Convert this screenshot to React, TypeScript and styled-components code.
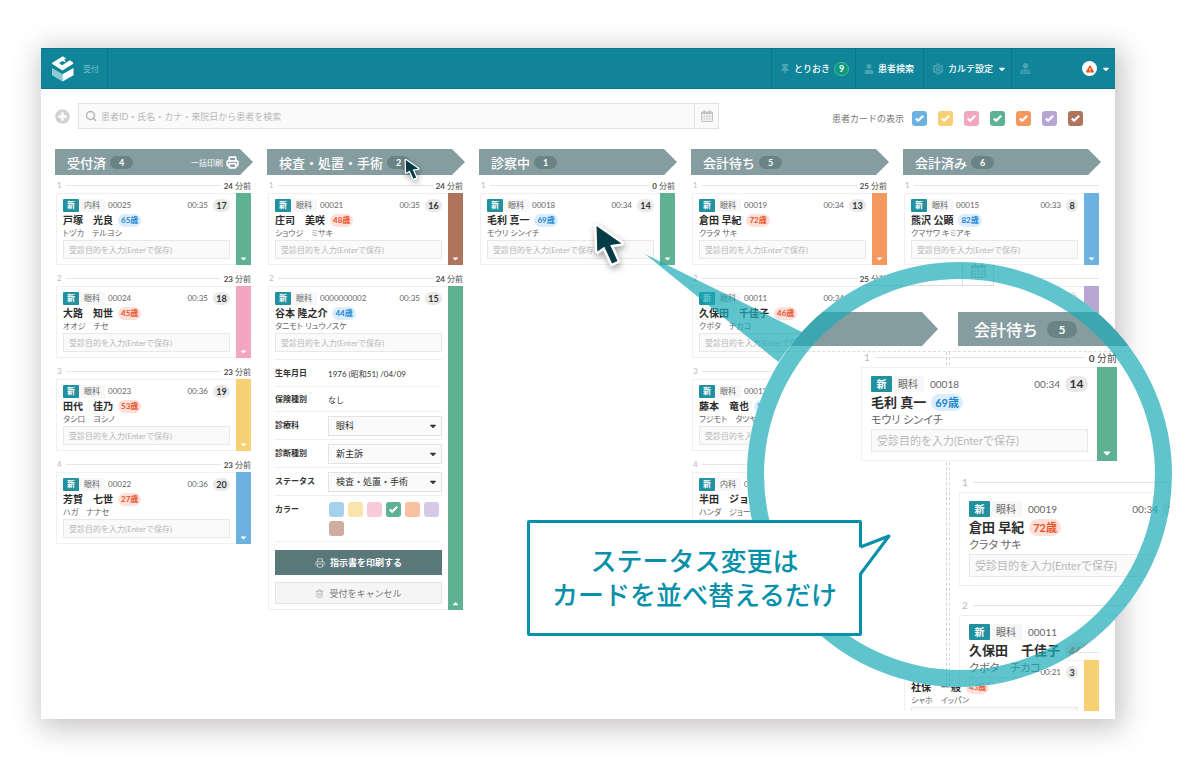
import React from "react";
import styled, { createGlobalStyle, css } from "styled-components";
import { FaCaretDown, FaCaretUp, FaExclamationTriangle, FaPlusCircle, FaThumbtack, FaUser, FaUserMd } from "react-icons/fa";
import { Check, Printer, Search, Settings, Trash2 } from "lucide-react";

const Global = createGlobalStyle`
  * { box-sizing: border-box; }
  body {
    margin: 0;
    background: #fff;
    color: #333;
    font-family: Lato, "Noto Sans CJK JP", sans-serif;
  }
  button, input, select { font-family: inherit; margin: 0; }
`;

const palette = {
  blue: "#6bb2e1",
  yellow: "#f8d074",
  pink: "#f3a6c1",
  green: "#5eb193",
  orange: "#f49860",
  purple: "#b9a5d3",
  brown: "#b0745d",
};
type Color = keyof typeof palette;

type Scale = "normal" | "large";
const metrics = {
  normal: {
    head: 16, meta: 8, small: 8, name: 10, pill: 9, age: 8, kana: 8,
    top: 5, side: 6, row: 13, nameRow: 13, kanaRow: 13, field: 19, bar: 15, badge: 16, fieldPad: 5, tag: 5,
  },
  large: {
    head: 20, meta: 10, small: 11, name: 13, pill: 12, age: 11, kana: 11,
    top: 8, side: 9, row: 16, nameRow: 17, kanaRow: 18, field: 23, bar: 20, badge: 21, fieldPad: 5, tag: 6,
  },
};
type Sized = { $scale: Scale };
const m = (key: keyof typeof metrics.normal) => (p: Sized) => `${metrics[p.$scale][key]}px`;

/* ---------- page and window ---------- */

const Page = styled.div`
  padding: 48px 85px 52px 41px;
  overflow: hidden;
`;

const AppWindow = styled.div`
  position: relative;
  background: #fff;
  box-shadow: 3px 5px 26px 4px rgba(80, 70, 70, 0.32);
  padding-bottom: 8px;
`;

const TopBar = styled.header`
  display: flex;
  height: 41px;
  background: #10859a;
  border-top: 1px solid #0c7388;
  border-bottom: 1px solid #0c7388;
  color: #fff;
`;

const Brand = styled.div`
  display: flex;
  align-items: center;
  gap: 9px;
  width: 67px;
  padding-left: 11px;
  border-right: 1px solid #0c778b;
  font-size: 8px;
  color: #79bbc7;
`;

const TopNav = styled.nav`
  display: flex;
  margin-left: auto;
`;

const NavButton = styled.button<{ $width: number }>`
  display: flex;
  align-items: center;
  gap: 4px;
  width: ${(p) => p.$width}px;
  padding: 0 4px 0 8px;
  border: 0;
  border-left: 1px solid #0c778b;
  background: none;
  color: #fff;
  font-size: 9px;
  font-weight: 500;
  white-space: nowrap;
  > svg:first-child { color: #4ba3b2; }
`;

const CountDot = styled.span`
  display: grid;
  place-items: center;
  width: 15px;
  height: 14px;
  border-radius: 7px;
  background: #0f9a7c;
  border: 1px solid #4db8a5;
  font-weight: 700;
`;

const AlertDot = styled.span`
  display: grid;
  place-items: center;
  width: 15px;
  height: 15px;
  margin-left: auto;
  border-radius: 50%;
  background: #fff;
  color: #e8501f;
`;

/* ---------- toolbar ---------- */

const Toolbar = styled.div`
  display: flex;
  align-items: center;
  padding: 14px 32px 20px 14px;
`;

const AddButton = styled.button`
  display: grid;
  padding: 0;
  margin-right: 8px;
  border: 0;
  background: none;
  color: #d2d2d2;
`;

const SearchBox = styled.div`
  display: flex;
  align-items: center;
  flex: 0 1 641px;
  height: 26px;
  border: 1px solid #e2e2e2;
  background: #fafafa;
  color: #b5b5b5;
  > svg { margin: 0 4px 0 6px; }
`;

const SearchInput = styled.input`
  flex: 1;
  min-width: 0;
  padding: 0;
  border: 0;
  outline: 0;
  background: none;
  font-size: 9px;
  &::placeholder { color: #b8b8b8; opacity: 1; }
`;

const CalendarButton = styled.button`
  display: grid;
  place-items: center;
  width: 24px;
  height: 24px;
  padding: 0;
  border: 0;
  border-left: 1px solid #e2e2e2;
  background: #fafafa;
  color: #c2c2c2;
`;

const Filters = styled.div`
  display: flex;
  align-items: center;
  gap: 11px;
  margin: 5px 0 0 auto;
  font-size: 9px;
  color: #777;
`;
const FilterLabel = styled.span`
  margin-right: -3px;
`;

const Tick = styled.label<{ $color: string; $pale?: boolean }>`
  display: grid;
  width: 15px;
  height: 15px;
  border-radius: 3px;
  background: ${(p) => p.$color};
  opacity: ${(p) => (p.$pale ? 0.6 : 1)};
  color: #fff;
  > * { grid-area: 1 / 1; place-self: center; }
  input { appearance: none; width: 15px; height: 15px; }
`;

/* ---------- board ---------- */

const Board = styled.main`
  display: grid;
  grid-template-columns: repeat(5, minmax(0, 1fr));
  gap: 14px;
  max-height: 562px;
  padding: 0 14px;
  overflow: hidden;
`;

const Lane = styled.section`
  min-width: 0;
`;

const LaneHead = styled.h2<Sized>`
  --tip: ${(p) => (p.$scale === "large" ? 16 : 13)}px;
  display: flex;
  align-items: center;
  margin: 0;
  background: #859da0;
  color: #fff;
  font-weight: 500;
  white-space: nowrap;
  clip-path: polygon(0 0, calc(100% - var(--tip)) 0, 100% 50%, calc(100% - var(--tip)) 100%, 0 100%);
  ${(p) =>
    p.$scale === "large"
      ? css`height: 34px; gap: 9px; padding: 0 16px; font-size: 16px;`
      : css`height: 26px; gap: 4px; padding: 0 14px 0 12px; font-size: 13px;`}
`;

const LaneCount = styled.span<Sized>`
  display: grid;
  place-items: center;
  background: #6a8385;
  font-weight: 700;
  ${(p) =>
    p.$scale === "large"
      ? css`width: 30px; height: 17px; border-radius: 9px; font-size: 12px;`
      : css`width: 23px; height: 13px; border-radius: 7px; font-size: 9px;`}
`;

const PrintAll = styled.button`
  display: flex;
  align-items: center;
  gap: 3px;
  margin-left: auto;
  padding: 0;
  border: 0;
  background: none;
  color: #fff;
  font-size: 8px;
`;

const CardList = styled.div`
  display: flex;
  flex-direction: column;
  gap: 5px;
  padding: 2px 2px 0 1px;
`;

const EntryHead = styled.div<Sized>`
  display: flex;
  align-items: center;
  gap: ${(p) => (p.$scale === "large" ? 4 : 3)}px;
  height: ${m("head")};
  padding-left: ${(p) => (p.$scale === "large" ? 3 : 1)}px;
  font-size: ${m("meta")};
  color: #b9b9b9;
  white-space: nowrap;
  &::before { content: attr(data-index); }
`;

const Rule = styled.span`
  flex: 1;
  height: 1px;
  margin-left: 1px;
  background: #e6e6e6;
`;

const Wait = styled.span`
  color: #4c4c4c;
  b { font-weight: 700; }
`;

const CardBox = styled.div`
  display: flex;
  border: 1px solid #f0f0f0;
  border-right: 0;
  background: #fff;
`;

const CardBody = styled.div<Sized>`
  flex: 1;
  min-width: 0;
  padding: ${m("top")} ${m("side")} ${m("top")};
`;

const MetaRow = styled.div<Sized>`
  display: flex;
  align-items: center;
  height: ${m("row")};
  font-size: ${m("meta")};
  line-height: ${m("row")};
  color: #666;
`;

const NewBadge = styled.span<Sized>`
  width: ${m("badge")};
  border-radius: 1px;
  background: #21909f;
  color: #fff;
  font-weight: 700;
  text-align: center;
`;

const DeptTag = styled.span<Sized>`
  padding: 0 ${m("tag")};
  background: #f7f7f7;
`;

const PatientId = styled.span<Sized>`
  margin-left: ${(p) => (p.$scale === "large" ? 6 : 3)}px;
`;

const VisitTime = styled.time`
  margin-left: auto;
`;

const Queue = styled.span<Sized & { $short: boolean }>`
  width: ${(p) => (p.$scale === "large" ? 23 : p.$short ? 12 : 17)}px;
  margin-left: 5px;
  border-radius: 9px;
  background: #e9e9e9;
  color: #333;
  font-size: ${m("pill")};
  font-weight: 700;
  text-align: center;
`;

const NameRow = styled.div<Sized>`
  display: flex;
  align-items: center;
  gap: 5px;
  height: ${m("nameRow")};
  margin-top: 2px;
  font-size: ${m("name")};
  font-weight: 700;
  line-height: ${m("nameRow")};
  color: #2c2c2c;
  white-space: pre;
`;

const Age = styled.span<Sized & { $male: boolean }>`
  padding: 0 ${(p) => (p.$scale === "large" ? 4 : 3)}px;
  border-radius: 9px;
  font-size: ${m("age")};
  background: ${(p) => (p.$male ? "#dbedfb" : "#fde0d9")};
  color: ${(p) => (p.$male ? "#1a86d0" : "#e9501f")};
`;

const Kana = styled.div<Sized>`
  height: ${m("kanaRow")};
  font-size: ${m("kana")};
  line-height: ${m("kanaRow")};
  font-feature-settings: "palt";
  color: #666;
  white-space: pre;
`;

const Purpose = styled.input<Sized>`
  display: block;
  width: 100%;
  height: ${m("field")};
  padding: 0 ${m("fieldPad")};
  border: 1px solid #e8e8e8;
  border-radius: 0;
  outline: 0;
  background: #fafafa;
  font-size: ${m("small")};
  &::placeholder { color: #b8b8b8; opacity: 1; }
`;

const ColorBar = styled.button<Sized & { $color: string }>`
  display: flex;
  justify-content: center;
  align-items: flex-end;
  width: ${m("bar")};
  margin: -1px 0;
  padding: 0 0 2px;
  border: 0;
  background: ${(p) => p.$color};
  color: #fff;
`;

const OffscreenGap = styled.div`
  height: 276px;
`;

/* ---------- opened card ---------- */

const Details = styled.div`
  margin-top: 7px;
`;

const Field = styled.div<{ $height: number; $top?: boolean }>`
  display: grid;
  grid-template-columns: 53px minmax(0, 1fr);
  align-items: ${(p) => (p.$top ? "start" : "center")};
  height: ${(p) => p.$height}px;
  padding-top: ${(p) => (p.$top ? 6 : 0)}px;
  border-top: 1px dotted #e2e2e2;
  font-size: 8px;
  &:last-child { border-bottom: 1px dotted #e2e2e2; }
`;

const FieldName = styled.label`
  font-weight: 700;
  line-height: 15px;
`;

const SelectWrap = styled.div`
  display: grid;
  align-items: center;
  > * { grid-area: 1 / 1; }
  > svg { justify-self: end; margin-right: 4px; pointer-events: none; }
`;

const Select = styled.select`
  appearance: none;
  width: 100%;
  height: 20px;
  padding: 0 7px;
  border: 1px solid #e2e2e2;
  border-radius: 0;
  background: #fafafa;
  color: #333;
  font-size: 9px;
`;

const Swatches = styled.div`
  display: flex;
  flex-wrap: wrap;
  gap: 4px;
  padding-left: 1px;
`;

const Action = styled.button<{ $primary?: boolean }>`
  display: flex;
  align-items: center;
  justify-content: center;
  gap: 5px;
  width: 100%;
  height: ${(p) => (p.$primary ? 25 : 22)}px;
  margin-top: ${(p) => (p.$primary ? 8 : 7)}px;
  border: 1px solid ${(p) => (p.$primary ? "#5a777a" : "#e4e4e4")};
  background: ${(p) => (p.$primary ? "#5a777a" : "#f5f5f5")};
  color: ${(p) => (p.$primary ? "#fff" : "#777")};
  font-size: 9px;
  font-weight: ${(p) => (p.$primary ? 700 : 400)};
`;

/* ---------- annotations over the window ---------- */

const Annotations = styled.div`
  position: absolute;
  top: 0;
  right: -58px;
  width: 772px;
  height: 100%;
  pointer-events: none;
`;

const Pointer = styled.svg`
  position: absolute;
  overflow: visible;
  filter: drop-shadow(1px 3px 3px rgba(0, 0, 0, 0.35));
`;

const Lens = styled.div`
  position: absolute;
  left: 346px;
  top: 214px;
  width: 425px;
  height: 425px;
  border-radius: 50%;
  background: #fff;
  overflow: hidden;
`;

const LensSearch = styled.div`
  display: flex;
  justify-content: flex-end;
  width: 247px;
  height: 24px;
  border: solid #ddd;
  border-width: 0 1px 1px 0;
`;

const LensCalendar = styled.div`
  display: grid;
  justify-items: center;
  width: 31px;
  padding-top: 1px;
  border-left: 1px solid #ddd;
  color: #bbb;
`;

const LensHeads = styled.div`
  display: grid;
  grid-template-columns: 191px 240px;
  gap: 20px;
  margin-top: 26px;
`;

const LensLanes = styled.div`
  display: grid;
  grid-template-columns: 200px 270px;
  gap: 2px;
  height: 400px;
  margin-top: 5px;
  border-top: 1px dashed #dcdcdc;
`;

const DropZone = styled.div`
  border-right: 1px dashed #cfcfcf;
`;

const LensCards = styled.div`
  display: flex;
  flex-direction: column;
  gap: 9px;
  padding: 120px 4px 0 9px;
  border-left: 1px dashed #dcdcdc;
`;

const Dragged = styled.div`
  position: absolute;
  left: 114px;
  top: 85px;
  width: 256px;
`;

const LensFrame = styled.svg`
  position: absolute;
  left: 239px;
  top: 200px;
`;

const Callout = styled.p`
  position: absolute;
  left: 126px;
  top: 472px;
  width: 335px;
  margin: 0;
  padding: 20px 0 22px;
  border: 3px solid #0790a9;
  border-radius: 2px;
  background: #fff;
  color: #0790a9;
  font-family: "Noto Sans CJK JP", sans-serif;
  font-size: 26px;
  font-weight: 500;
  line-height: 34px;
  text-align: center;
`;

const CalloutTail = styled.svg`
  position: absolute;
  left: 100%;
  top: 10px;
  margin-left: -1px;
  overflow: visible;
`;

/* ---------- drawings ---------- */

const Logo = () => (
  <svg width="22" height="26" viewBox="0 0 22 26" aria-hidden="true">
    <path d="M0 12 10.500 18.200V25.500L0 19.200Z" fill="#8fcbd3" />
    <path d="M21.500 12 10.500 18.200V25.500L21.500 19.200Z" fill="#fff" />
    <path d="M10.800 .2 14.200 2.400 7 7.200 10.200 9.300 17.800 4.200 21.200 6.400 21.200 7.800 10.400 14.400 0 7.800V7Z" fill="#fff" />
    <path d="M10.400 3.900 13.200 5.600" stroke="#fff" strokeWidth="1.600" />
  </svg>
);

const Calendar = ({ size }: { size: number }) => (
  <svg width={size} height={size} viewBox="0 0 12 12" aria-hidden="true">
    <rect x="0.5" y="2" width="11" height="9.5" rx="0.6" fill="none" stroke="currentColor" />
    <path d="M.5 2h11v2H.5ZM2.5 .2h1.6v3H2.5ZM7.9 .2h1.6v3H7.9Z" fill="currentColor" />
    <path d="M3.2 4v7.5M6 4v7.5M8.8 4v7.5M.5 6.4h11M.5 8.9h11" stroke="currentColor" strokeWidth="0.6" />
  </svg>
);

const Arrow = ({ left, top, width }: { left: number; top: number; width: number }) => (
  <Pointer style={{ left, top }} width={width} height={width * 1.5} viewBox="0 0 28 42" aria-hidden="true">
    <path
      d="M1.500 2 2.300 27.500 9.300 22.800 17 39.500 22.500 37 15.200 21 26.500 19.500Z"
      fill="#053c47"
      stroke="#fff"
      strokeWidth="5"
      strokeLinejoin="round"
      paintOrder="stroke"
    />
  </Pointer>
);

/* ---------- data ---------- */

type Patient = {
  dept: string;
  id: string;
  time: string;
  queue: number;
  name: string;
  kana: string;
  age: number;
  male?: boolean;
  color: Color;
  wait?: number;
  open?: boolean;
};

const p = (
  dept: string, id: string, time: string, queue: number, name: string, kana: string,
  age: number, male: boolean, color: Color, wait?: number, open?: boolean,
): Patient => ({ dept, id, time, queue, name, kana, age, male, color, wait, open });

const mouri = p("眼科", "00018", "00:34", 14, "毛利 真一", "モウリ シンイチ", 69, true, "green", 0);
const kurata = p("眼科", "00019", "00:34", 13, "倉田 早紀", "クラタ サキ", 72, false, "orange", 25);
const kubota = p("眼科", "00011", "00:34", 10, "久保田　千佳子", "クボタ　チカコ", 46, false, "orange", 25);

const received = [
  p("内科", "00025", "00:35", 17, "戸塚　光良", "トヅカ　テルヨシ", 65, true, "green", 24),
  p("眼科", "00024", "00:35", 18, "大路　知世", "オオジ　チセ", 45, false, "pink", 23),
  p("眼科", "00023", "00:36", 19, "田代　佳乃", "タシロ　ヨシノ", 53, false, "yellow", 23),
  p("眼科", "00022", "00:36", 20, "芳賀　七世", "ハガ　ナナセ", 27, false, "blue", 23),
];
const exam = [
  p("眼科", "00021", "00:35", 16, "庄司　美咲", "ショウジ　ミサキ", 48, false, "brown", 24),
  p("眼科", "0000000002", "00:35", 15, "谷本 隆之介", "タニモト リュウノスケ", 44, true, "green", 24, true),
];
const payment = [
  kurata,
  kubota,
  p("眼科", "00012", "00:34", 9, "藤本　竜也", "フジモト　タツヤ", 51, true, "orange", 25),
  p("内科", "00010", "00:34", 7, "半田　ジョージ", "ハンダ　ジョージ", 38, true, "orange", 25),
];
const kumazawa = p("眼科", "00015", "00:33", 8, "熊沢 公顕", "クマサワ キミアキ", 82, true, "blue");
const second = p("眼科", "00014", "00:33", 6, "石井　恵", "イシイ　メグミ", 39, false, "purple");
const general = p("眼科", "00003", "00:21", 3, "社保　一般", "シャホ　イッパン", 45, false, "yellow");

/* ---------- components ---------- */

const TickBox = ({ color, label, checked = true, pale }: { color: Color; label: string; checked?: boolean; pale?: boolean }) => (
  <Tick $color={palette[color]} $pale={pale}>
    <input type="checkbox" defaultChecked={checked} aria-label={label} />
    {checked && <Check size={11} strokeWidth={5} strokeLinecap="butt" aria-hidden="true" />}
  </Tick>
);

const Choice = ({ id, label, value }: { id: string; label: string; value: string }) => (
  <Field $height={28}>
    <FieldName htmlFor={id}>{label}</FieldName>
    <SelectWrap>
      <Select id={id} defaultValue={value}>
        <option>{value}</option>
      </Select>
      <FaCaretDown size={10} />
    </SelectWrap>
  </Field>
);

const PatientDetails = () => (
  <>
    <Details>
      <Field $height={27}>
        <FieldName as="span">生年月日</FieldName>
        <span>1976 (昭和51) /04/09</span>
      </Field>
      <Field $height={25}>
        <FieldName as="span">保険種別</FieldName>
        <span>なし</span>
      </Field>
      <Choice id="dept" label="診療科" value="眼科" />
      <Choice id="kind" label="診断種別" value="新主訴" />
      <Choice id="status" label="ステータス" value="検査・処置・手術" />
      <Field $height={47} $top>
        <FieldName as="span">カラー</FieldName>
        <Swatches>
          {(Object.keys(palette) as Color[]).map((c) => (
            <TickBox key={c} color={c} label={c} checked={c === "green"} pale={c !== "green"} />
          ))}
        </Swatches>
      </Field>
    </Details>
    <Action $primary><Printer size={10} opacity={0.7} />指示書を印刷する</Action>
    <Action><Trash2 size={9} opacity={0.6} />受付をキャンセル</Action>
  </>
);

const PatientEntry = ({ index, patient, scale = "normal" }: { index: number; patient: Patient; scale?: Scale }) => {
  const caret = scale === "large" ? 12 : 9;
  return (
    <article>
      <EntryHead $scale={scale} data-index={index}>
        <Rule />
        {patient.wait !== undefined && <Wait><b>{patient.wait}</b> 分前</Wait>}
      </EntryHead>
      <CardBox>
        <CardBody $scale={scale}>
          <MetaRow $scale={scale}>
            <NewBadge $scale={scale}>新</NewBadge>
            <DeptTag $scale={scale}>{patient.dept}</DeptTag>
            <PatientId $scale={scale}>{patient.id}</PatientId>
            <VisitTime>{patient.time}</VisitTime>
            <Queue $scale={scale} $short={patient.queue < 10}>{patient.queue}</Queue>
          </MetaRow>
          <NameRow $scale={scale}>
            {patient.name}
            <Age $scale={scale} $male={!!patient.male}>{patient.age}歳</Age>
          </NameRow>
          <Kana $scale={scale}>{patient.kana}</Kana>
          <Purpose $scale={scale} placeholder="受診目的を入力(Enterで保存)" aria-label="受診目的" />
          {patient.open && <PatientDetails />}
        </CardBody>
        <ColorBar $scale={scale} $color={palette[patient.color]} aria-label="詳細">
          {patient.open ? <FaCaretUp size={caret} /> : <FaCaretDown size={caret} />}
        </ColorBar>
      </CardBox>
    </article>
  );
};

const BoardLane = ({ title, count, patients, action, children }: {
  title: string; count: number; patients: Patient[]; action?: React.ReactNode; children?: React.ReactNode;
}) => (
  <Lane>
    <LaneHead $scale="normal">
      {title}
      <LaneCount $scale="normal">{count}</LaneCount>
      {action}
    </LaneHead>
    <CardList>
      {patients.map((patient, i) => <PatientEntry key={patient.id} index={i + 1} patient={patient} />)}
      {children}
    </CardList>
  </Lane>
);

export default function App() {
  return (
    <Page>
      <Global />
      <AppWindow>
        <TopBar>
          <Brand><Logo />受付</Brand>
          <TopNav>
            <NavButton $width={84}><FaThumbtack size={10} />とりおき<CountDot>9</CountDot></NavButton>
            <NavButton $width={68}><FaUser size={10} />患者検索</NavButton>
            <NavButton $width={88}><Settings size={12} strokeWidth={3} />カルテ設定<FaCaretDown size={10} /></NavButton>
            <NavButton $width={104} aria-label="アカウント">
              <FaUserMd size={11} />
              <AlertDot><FaExclamationTriangle size={8} /></AlertDot>
              <FaCaretDown size={10} />
            </NavButton>
          </TopNav>
        </TopBar>

        <Toolbar>
          <AddButton aria-label="追加"><FaPlusCircle size={15} /></AddButton>
          <SearchBox>
            <Search size={12} strokeWidth={3} />
            <SearchInput placeholder="患者ID・氏名・カナ・来院日から患者を検索" aria-label="患者を検索" />
            <CalendarButton aria-label="カレンダー"><Calendar size={12} /></CalendarButton>
          </SearchBox>
          <Filters>
            <FilterLabel>患者カードの表示</FilterLabel>
            {(Object.keys(palette) as Color[]).map((c) => <TickBox key={c} color={c} label={c} />)}
          </Filters>
        </Toolbar>

        <Board>
          <BoardLane title="受付済" count={4} patients={received} action={<PrintAll>一括印刷<Printer size={13} strokeWidth={3} /></PrintAll>} />
          <BoardLane title="検査・処置・手術" count={2} patients={exam} />
          <BoardLane title="診察中" count={1} patients={[mouri]} />
          <BoardLane title="会計待ち" count={5} patients={payment} />
          <BoardLane title="会計済み" count={6} patients={[kumazawa, second]}>
            <OffscreenGap />
            <PatientEntry index={6} patient={general} />
          </BoardLane>
        </Board>

        <Annotations>
          <Arrow left={4} top={111} width={14} />
          <Arrow left={194} top={176} width={28} />
          <Lens>
            <LensSearch><LensCalendar><Calendar size={15} /></LensCalendar></LensSearch>
            <LensHeads>
              <LaneHead as="div" $scale="large" />
              <LaneHead as="div" $scale="large">会計待ち<LaneCount $scale="large">5</LaneCount></LaneHead>
            </LensHeads>
            <LensLanes>
              <DropZone />
              <LensCards>
                <PatientEntry scale="large" index={1} patient={{ ...kurata, wait: undefined }} />
                <PatientEntry scale="large" index={2} patient={{ ...kubota, wait: undefined }} />
              </LensCards>
            </LensLanes>
            <Dragged><PatientEntry scale="large" index={1} patient={mouri} /></Dragged>
          </Lens>
          <LensFrame width="532" height="444" viewBox="640 248 532 444" aria-hidden="true">
            <g fill="#1dabb8" fillOpacity="0.7">
              <path d="M645 254 802 332A212.500 212.500 0 0 0 778.500 362Z" />
              <path
                fillRule="evenodd"
                d="M747 474.500a212.500 212.500 0 1 0 425 0a212.500 212.500 0 1 0 -425 0ZM764 474.500a195.500 195.500 0 1 1 391 0a195.500 195.500 0 1 1 -391 0Z"
              />
            </g>
          </LensFrame>
          <Callout>
            ステータス変更は<br />カードを並べ替えるだけ
            <CalloutTail width="34" height="46" viewBox="0 0 34 46" aria-hidden="true">
              <path d="M0 15 30 3 0 42Z" fill="#fff" />
              <path d="M2.500 14 31 3 2.500 41" fill="none" stroke="#0790a9" strokeWidth="3" strokeLinejoin="round" />
            </CalloutTail>
          </Callout>
        </Annotations>
      </AppWindow>
    </Page>
  );
}
